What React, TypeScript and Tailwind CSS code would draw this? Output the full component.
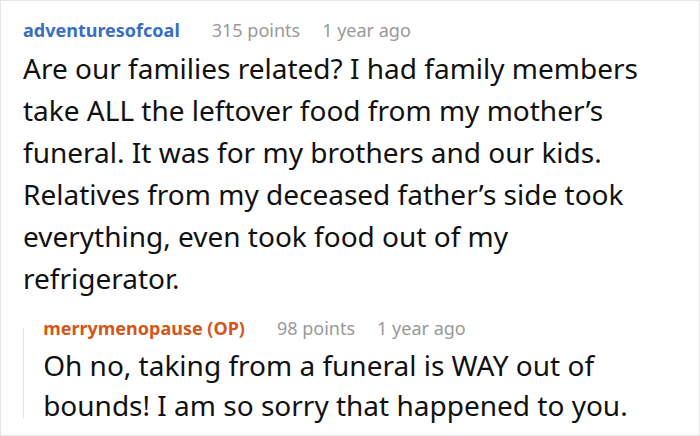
export default function App() {
  return (
    <div className="w-[700px] h-[436px] bg-white border border-[#e6e6e6] overflow-hidden font-['Noto_Sans',sans-serif]">
      <div className="pl-[22px] pt-[17px]">
        <div className="flex items-baseline text-[18px] leading-[24px]">
          <span className="font-bold text-[#3a6ebf]">adventuresofcoal</span>
          <span className="ml-[32px] text-[#999999]">315 points</span>
          <span className="ml-[22px] text-[#999999]">1 year ago</span>
        </div>
        <p className="text-[28px] leading-[42px] text-[#111111] pr-[30px] mt-[5px]">
          Are our families related? I had family members take ALL the leftover food from my mother’s funeral. It was for my brothers and our kids. Relatives from my deceased father’s side took everything, even took food out of my refrigerator.
        </p>
        <div className="flex mt-[17px]">
          <div className="w-[2px] bg-[#e3e3e3] mt-[12px] mb-[7px]" />
          <div className="pl-[19px]">
            <div className="flex items-baseline text-[18px] leading-[24px]">
              <span className="font-bold text-[#d4561c]">merrymenopause (OP)</span>
              <span className="ml-[32px] text-[#999999]">98 points</span>
              <span className="ml-[22px] text-[#999999]">1 year ago</span>
            </div>
            <p className="text-[28px] leading-[40px] text-[#111111] pr-[30px] mt-[5px]">
              Oh no, taking from a funeral is WAY out of bounds! I am so sorry that happened to you.
            </p>
          </div>
        </div>
      </div>
    </div>
  );
}
